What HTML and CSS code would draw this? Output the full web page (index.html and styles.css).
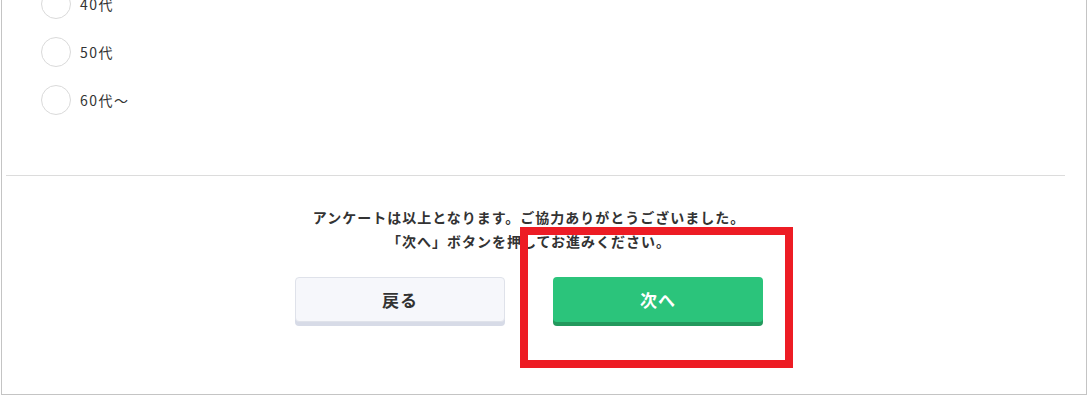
FILE: index.html
```html
<!DOCTYPE html>
<html lang="ja">
<head>
<meta charset="utf-8">
<title>アンケート</title>
<link rel="stylesheet" href="styles.css">
</head>
<body>
<div class="frame">
  <ul class="options">
    <li class="option"><span class="radio"></span><span class="label">40代</span></li>
    <li class="option"><span class="radio"></span><span class="label">50代</span></li>
    <li class="option"><span class="radio"></span><span class="label">60代～</span></li>
  </ul>
  <hr class="divider">
  <div class="footer">
    <p class="message">アンケートは以上となります。ご協力ありがとうございました。<br>「次へ」ボタンを押してお進みください。</p>
    <div class="actions">
      <button class="btn btn-back" type="button">戻る</button>
      <button class="btn btn-next" type="button">次へ</button>
    </div>
  </div>
</div>
<div class="highlight"></div>
</body>
</html>
```

FILE: styles.css
```css
* { box-sizing: border-box; }
html, body { margin: 0; padding: 0; background: #fff; }
body {
  font-family: "Noto Sans CJK JP", "Noto Sans", sans-serif;
  color: #333;
  overflow: hidden;
  height: 402px;
}
.frame {
  margin-left: 1px;
  width: 1086px;
  height: 395px;
  border: 1px solid #c4c4c4;
  border-top: 0;
  overflow: hidden;
}
.options {
  list-style: none;
  margin: -20px 0 0 0;
  padding: 0 0 0 39px;
}
.option {
  display: flex;
  align-items: center;
  height: 48px;
}
.radio {
  width: 30px;
  height: 30px;
  border: 1px solid #dadada;
  border-radius: 50%;
  background: #fff;
  flex: none;
}
.label {
  margin-left: 9px;
  font-size: 14px;
  letter-spacing: 1.5px;
  color: #333;
}
.divider {
  border: 0;
  height: 1px;
  background: #dcdcdc;
  margin: 51px 21px 0 4px;
}
.footer {
  margin-right: 30px;
  padding-top: 29px;
  text-align: center;
}
.message {
  margin: 0;
  font-size: 14px;
  font-weight: bold;
  line-height: 24px;
  letter-spacing: 1px;
  color: #333;
}
.actions {
  display: flex;
  justify-content: center;
  gap: 48px;
  margin-top: 24px;
}
.btn {
  width: 210px;
  height: 45px;
  border-radius: 4px;
  font-family: inherit;
  font-size: 17px;
  font-weight: bold;
  letter-spacing: 1px;
  cursor: pointer;
  padding: 0;
}
.btn-back {
  background: #f6f7fb;
  border: 1px solid #dfe2ea;
  color: #333;
  box-shadow: 0 4px 0 #d7dbe7;
}
.btn-next {
  background: #2bc47b;
  border: 0;
  color: #fff;
  box-shadow: 0 4px 0 #23995d;
}
.highlight {
  position: absolute;
  left: 520px;
  top: 227px;
  width: 273px;
  height: 141px;
  border: 8px solid #ed1c24;
}
```
